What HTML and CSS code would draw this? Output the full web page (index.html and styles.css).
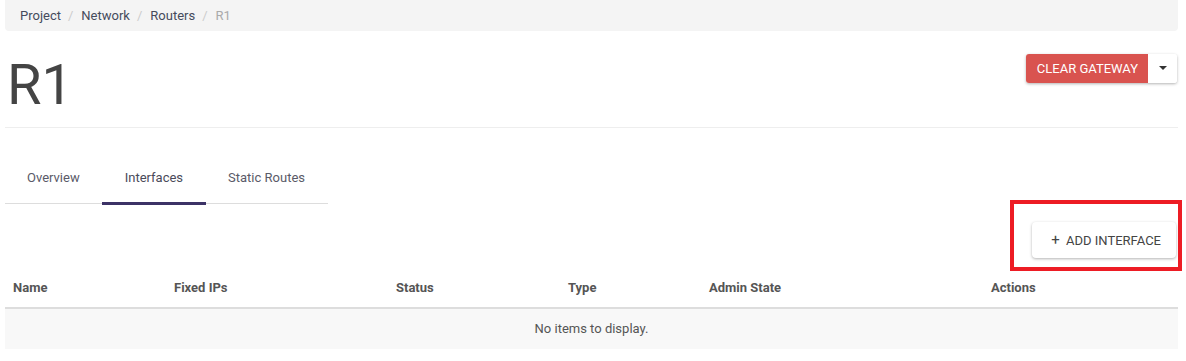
FILE: index.html
```html
<!DOCTYPE html>
<html lang="en">
<head>
    <meta charset="UTF-8">
    <title>R1 - Router Details</title>
    <link rel="stylesheet" href="styles.css">
</head>
<body>
    <div class="container">
        <ol class="breadcrumb">
            <li><a href="#">Project</a></li>
            <li><a href="#">Network</a></li>
            <li><a href="#">Routers</a></li>
            <li class="active">R1</li>
        </ol>

        <div class="page-header">
            <h1>R1</h1>
            <div class="btn-group">
                <button class="btn btn-danger">Clear Gateway</button>
                <button class="btn btn-toggle"><span class="caret"></span></button>
            </div>
        </div>

        <ul class="nav-tabs">
            <li><a href="#">Overview</a></li>
            <li class="active"><a href="#">Interfaces</a></li>
            <li><a href="#">Static Routes</a></li>
        </ul>

        <div class="toolbar">
            <button class="btn btn-default"><span class="plus">+</span> Add Interface</button>
            <span class="highlight"></span>
        </div>

        <table class="table">
            <colgroup>
                <col style="width: 161px">
                <col style="width: 222px">
                <col style="width: 172px">
                <col style="width: 141px">
                <col style="width: 282px">
                <col>
            </colgroup>
            <thead>
                <tr>
                    <th>Name</th>
                    <th>Fixed IPs</th>
                    <th>Status</th>
                    <th>Type</th>
                    <th>Admin State</th>
                    <th>Actions</th>
                </tr>
            </thead>
            <tbody>
                <tr>
                    <td colspan="6" class="empty">No items to display.</td>
                </tr>
            </tbody>
        </table>
    </div>
</body>
</html>
```

FILE: styles.css
```css
body {
    font-family: Roboto, "Liberation Sans", sans-serif;
    font-size: 13px;
    line-height: 18px;
    color: #555;
    margin: 0;
    background-color: white;
}
.container {
    margin: 0 8px 0 5px;
}
.breadcrumb {
    list-style: none;
    margin: 0;
    padding: 7px 15px 6px;
    background-color: #f4f4f4;
    border-radius: 0 0 4px 4px;
    display: flex;
}
.breadcrumb li + li::before {
    content: "/";
    color: #ccc;
    padding: 0 8px 0 7px;
}
.breadcrumb a {
    color: #454b5c;
    text-decoration: none;
}
.breadcrumb .active {
    color: #aaa;
}
.page-header {
    display: flex;
    justify-content: space-between;
    align-items: flex-start;
    padding: 23px 0 11px 2px;
    border-bottom: 1px solid #eee;
}
h1 {
    margin: 0;
    font-size: 56px;
    line-height: 62px;
    font-weight: 400;
    color: #444;
}
.btn {
    font-family: Roboto, "Liberation Sans", sans-serif;
    font-size: 13px;
    text-transform: uppercase;
    border: none;
    cursor: pointer;
}
.btn-group {
    display: flex;
    box-shadow: 0 1px 3px rgba(0, 0, 0, 0.3);
    border-radius: 3px;
    margin-right: 1px;
}
.btn-danger {
    background-color: #d9534f;
    color: white;
    height: 29px;
    padding: 0 10px 0 11px;
    border-radius: 3px 0 0 3px;
}
.btn-toggle {
    background-color: white;
    width: 29px;
    height: 29px;
    padding: 0;
    border-radius: 0 3px 3px 0;
}
.caret {
    display: inline-block;
    border-top: 4px solid #333;
    border-left: 4px solid transparent;
    border-right: 4px solid transparent;
    vertical-align: middle;
    margin-top: -3px;
}
.nav-tabs {
    list-style: none;
    margin: 24px 0 0;
    padding: 0;
    display: flex;
    width: 323px;
    border-bottom: 1px solid #ddd;
}
.nav-tabs a {
    display: block;
    padding: 17px 22px 15px 22px;
    margin-bottom: -2px;
    border-bottom: 3px solid transparent;
    color: #5a5a68;
    text-decoration: none;
}
.nav-tabs .active a {
    border-bottom-color: #3c3266;
    padding-left: 23px;
    padding-right: 23px;
    color: #4a4a5a;
}
.toolbar {
    position: relative;
    display: flex;
    justify-content: flex-end;
    margin: 18px 2px 7px 0;
}
.btn-default {
    background-color: white;
    color: #444;
    height: 36px;
    padding: 0 15px 0 19px;
    border-radius: 4px;
    box-shadow: 0 1px 3px rgba(0, 0, 0, 0.3);
}
.plus {
    font-size: 15px;
    margin-right: 3px;
}
.highlight {
    position: absolute;
    right: -6px;
    top: -22px;
    width: 164px;
    height: 63px;
    border: 4px solid #ed1c24;
}
.table {
    width: 100%;
    border-collapse: collapse;
}
.table th {
    text-align: left;
    font-weight: bold;
    color: #555;
    padding: 14px 8px 10px;
    border-bottom: 2px solid #ddd;
}
.table td {
    padding: 11px 8px;
}
.empty {
    background-color: #f8f8f8;
    text-align: center;
    color: #555;
}
```
